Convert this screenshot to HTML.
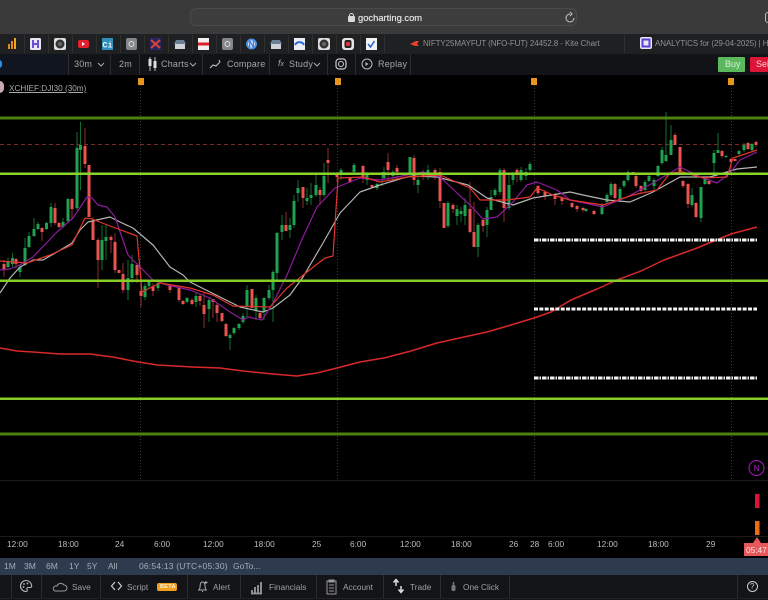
<!DOCTYPE html>
<html><head><meta charset="utf-8">
<style>
html,body{margin:0;padding:0;width:768px;height:600px;overflow:hidden;background:#000;font-family:"Liberation Sans",sans-serif}
#w{position:absolute;left:0;top:0;width:768px;height:600px;overflow:hidden;filter:blur(.3px)}
.a{position:absolute}
.t{position:absolute;white-space:nowrap;line-height:12px}
</style></head><body><div id="w">
<div class="a" style="left:0;top:0;width:768px;height:34px;background:#3a3a3a"></div>
<div class="a" style="left:190px;top:8px;width:387px;height:18px;background:#3d3d3d;border:1px solid #4b4b4b;border-radius:6px;box-sizing:border-box"></div>
<div class="a" style="left:348px;top:16px;width:7px;height:6px;background:#d8d8d8;border-radius:1px"></div>
<div class="a" style="left:349px;top:13px;width:3px;height:4px;border:1px solid #d8d8d8;border-bottom:0;border-radius:3px 3px 0 0"></div>
<div class="t" style="left:358px;top:12px;font-size:9.400px;color:#e2e2e2;text-shadow:0 0 .5px #e2e2e2">gocharting.com</div>
<svg class="a" style="left:564px;top:11px" width="12" height="13" viewBox="0 0 12 13" fill="none" stroke="#c8c8c8" stroke-width="1"><path d="M6 3A4 4 0 1 0 10 7M6 1l2 2-2 2"/></svg>
<div class="a" style="left:765px;top:12px;width:6px;height:11px;border:1px solid #bbb;border-radius:7px;box-sizing:border-box"></div>

<div class="a" style="left:0;top:34px;width:768px;height:20px;background:#1f2022"></div>
<svg class="a" style="left:0;top:34px" width="768" height="20">
<g stroke="#2e2f31"><path d="M24.500 1V19M48.500 1V19M72.500 1V19M96.500 1V19M120.500 1V19M144.500 1V19M168.500 1V19M192.500 1V19M216.500 1V19M240.500 1V19M264.500 1V19M288.500 1V19M312.500 1V19M336.500 1V19M360.500 1V19M384.500 1V19M624.500 1V19"/></g>
<g transform="translate(0,1)">
<rect x="8" y="9" width="2" height="5" fill="#e08a1e"/><rect x="11" y="6" width="2" height="8" fill="#e08a1e"/><rect x="14" y="3" width="2" height="11" fill="#f4a623"/>
<rect x="30" y="3" width="11" height="12" rx="1.500" fill="#e8e6f5"/><path d="M33 5V13M38 5V13M33 9H38" stroke="#6a4fd8" stroke-width="2"/>
<rect x="54" y="3" width="12" height="12" rx="2" fill="#ddd"/><circle cx="60" cy="9" r="4.500" fill="#333"/><circle cx="60" cy="9" r="2" fill="#666"/>
<rect x="78" y="5" width="11" height="8" rx="2" fill="#e8202e"/><path d="M82 7v4l3-2z" fill="#fff"/>
<rect x="102" y="3" width="11" height="12" fill="#2f8fb8"/><text x="107.500" y="12.500" font-size="8.500" font-weight="bold" fill="#e8f5fb" text-anchor="middle" font-family="Liberation Mono">Ci</text>
<rect x="126" y="3" width="11" height="12" rx="2" fill="#85868a"/><circle cx="131.500" cy="9" r="2.500" fill="none" stroke="#ddd"/>
<rect x="150" y="3" width="11" height="12" rx="1" fill="#2a2560"/><path d="M151 5l9 8M160 5l-9 8" stroke="#d8443a" stroke-width="2"/>
<path d="M175 8h10v6h-10z" fill="#cfd3d8"/><path d="M176 5h8l2 4h-12z" fill="#6a7e96"/>
<rect x="198" y="3" width="11" height="12" fill="#f2f2f2"/><path d="M198 9h11" stroke="#d8202e" stroke-width="3"/>
<rect x="222" y="3" width="11" height="12" rx="2" fill="#85868a"/><circle cx="227.500" cy="9" r="2.500" fill="none" stroke="#ddd"/>
<circle cx="251.500" cy="9" r="5.500" fill="#4a90e8"/><circle cx="251.500" cy="9" r="3.500" fill="#dfe9f5"/><text x="251.500" y="12" font-size="8" font-weight="bold" fill="#2a6ad8" text-anchor="middle" font-family="Liberation Sans">N</text>
<path d="M271 8h10v6h-10z" fill="#cfd3d8"/><path d="M272 5h8l2 4h-12z" fill="#6a7e96"/>
<rect x="294" y="3" width="11" height="12" fill="#e9eef5"/><path d="M295 10a5 5 0 0 1 9 0" fill="none" stroke="#2a6ad8" stroke-width="2"/>
<rect x="318" y="3" width="12" height="12" rx="2" fill="#ddd"/><circle cx="324" cy="9" r="4.500" fill="#333"/><circle cx="324" cy="9" r="2" fill="#666"/>
<rect x="342" y="3" width="12" height="12" rx="3" fill="#e5e5e5"/><rect x="344.500" y="5" width="7" height="8" rx="2" fill="#222"/><rect x="346" y="7" width="4" height="4" fill="#d8333a"/>
<rect x="366" y="3" width="11" height="12" fill="#f2f2f2"/><path d="M368 9l2.500 3 4-6" fill="none" stroke="#2060c8" stroke-width="1.500"/>
<path d="M410 9l6-3h3l-2 3 2 2h-4z" fill="#e8412c"/>
<rect x="640" y="2" width="12" height="12" rx="2" fill="#e9e6fa"/><rect x="642.500" y="4.500" width="7" height="7" fill="none" stroke="#5a3fd0" stroke-width="2"/>
</g></svg>
<div class="t" style="left:423px;top:38px;font-size:8px;letter-spacing:-.09px;color:#8f9092">NIFTY25MAYFUT (NFO-FUT) 24452.8 - Kite Chart</div>
<div class="t" style="left:655px;top:38px;font-size:8px;letter-spacing:-.09px;color:#8f9092">ANALYTICS for (29-04-2025) | H</div>

<div class="a" style="left:0;top:54px;width:768px;height:21px;background:#121317"></div>
<div class="a" style="left:0;top:54px;width:68px;height:21px;background:#10151f"></div>
<div class="a" style="left:-4px;top:60px;width:6px;height:8px;background:#2f8ae8;border-radius:4px"></div>
<svg class="a" style="left:0;top:54px" width="768" height="22">
<path d="M68.500 0V21M110.500 0V21M139.500 0V21M202.500 0V21M269.500 0V21M327.500 0V21M355.500 0V21M410.500 0V21" stroke="#2a2c30"/>
<path d="M98 8l3 3 3-3M190 8l3 3 3-3M314 8l3 3 3-3" transform="translate(0,1)" fill="none" stroke="#aaa"/>
<path d="M150 3V17M155 3V17" stroke="#bbb"/><rect x="148.500" y="5" width="3" height="7" fill="#ddd"/><rect x="153.500" y="7" width="3" height="7" fill="#ddd"/>
<path d="M210 14l3-3 3 1 4-4M219 6l1 2" fill="none" stroke="#bbb" stroke-width="1.200"/>
<rect x="336" y="5" width="10" height="10" rx="3" fill="none" stroke="#ccc" stroke-width="1.200"/><circle cx="341" cy="10" r="2.500" fill="none" stroke="#ccc"/>
<circle cx="367" cy="10" r="5" fill="none" stroke="#bbb"/><path d="M365.500 8v4l3-2z" fill="#bbb"/>
</svg>
<div class="t" style="left:74px;top:58px;font-size:9px;color:#a4a6aa;letter-spacing:.2px">30m</div>
<div class="t" style="left:119px;top:58px;font-size:9px;color:#a4a6aa;letter-spacing:.2px">2m</div>
<div class="t" style="left:161px;top:58px;font-size:9px;color:#a4a6aa;letter-spacing:.2px">Charts</div>
<div class="t" style="left:227px;top:58px;font-size:9px;color:#a4a6aa;letter-spacing:.2px">Compare</div>
<div class="t" style="left:278px;top:57px;font-size:9px;color:#a4a6aa;font-style:italic">f<span style="font-size:7px">x</span></div>
<div class="t" style="left:289px;top:58px;font-size:9px;color:#a4a6aa;letter-spacing:.2px">Study</div>
<div class="t" style="left:378px;top:58px;font-size:9px;color:#a4a6aa;letter-spacing:.2px">Replay</div>
<div class="a" style="left:718px;top:57px;width:27px;height:15px;background:#5cb85c;border-radius:1px"></div>
<div class="t" style="left:725px;top:58px;font-size:9px;color:#d8f0d8">Buy</div>
<div class="a" style="left:750px;top:57px;width:18px;height:15px;background:#dc1538;border-radius:1px"></div>
<div class="t" style="left:756px;top:58px;font-size:9px;color:#f5d0d5">Sell</div>

<svg class="a" style="left:0;top:75px" width="768" height="483" viewBox="0 75 768 483">
<path d="M140.500 85V480M337.500 85V480M534.500 85V480M731.500 85V480" stroke="#3a3a3a" stroke-dasharray="1 2"/>
<path d="M0 480.500H768M0 536.500H768" stroke="#1b1b1b"/>
<path d="M0 144.500H757" stroke="#7a2a2c" stroke-dasharray="4 3"/>

<g fill="none" stroke="#12702f" stroke-width="1">
<path d="M8 258V268M12.500 253V267M20 265V277M25 238V266M29 232V248M34 218V237M38 222V230M46.500 222V230M51 203V227M63 218V228M68 198V222M77 132V210M80.500 122V190M102 225V270M106 225V260M128 260V300M132 255V283M145 283V300M149 280V288M158 281V291M187 297V303M196 293V307M209 297V322M230 333V350M234 327V335M239 323V330M243 313V324M247 285V317M256 295V320M264 297V320M269 285V300M273 270V322M277 232V280M282 215V240M290 218V238M294 195V228M298 180V202M307 188V205M311 183V205M316 175V197M324 163V197M341 168V180M354 163V175M367 172V185M377 183V190M382 172V186M384 167V180M393 170V180M410 157V177M418 177V193M428 165V180M448 201V228M457 205V225M461 207V222M465 198V225M478 223V257M487 207V237M491 190V210M495 188V197M500 168V195M509 173V210M513 172V185M521 167V182M526 168V180M530 162V172M586 208V212M602 203V215M607 193V203M611 182V197M620 187V202M624 180V188M628 170V182M645 180V192M649 175V182M654 178V192M658 165V177M662 147V165M666 112V162M671 125V155M692 188V207M701 187V222M705 178V185M714 150V173M718 133V153M726 155V158M739 150V155M744 143V152M752 143V152"/>
</g>
<g fill="none" stroke="#8e2c2e" stroke-width="1">
<path d="M4 260V277M16 258V268M42 227V241M55 203V225M59 222V228M72 198V220M85 128V168M89 165V217M93 217V240M98 238V288M111 235V253M115 233V273M119 270V273M123 263V293M137 263V283M141 277V307M153 283V296M170 285V293M179 287V302M183 300V305M192 298V305M200 294V306M204 293V328M213 300V318M217 303V322M222 313V322M226 323V337M252 289V308M260 312V320M286 212V230M303 187V208M320 187V205M328 148V183M337 172V182M350 177V183M363 165V183M372 185V188M388 153V180M397 165V178M414 155V185M423 170V180M435 168V180M440 168V208M444 203V228M453 203V213M470 182V233M474 202V247M483 218V232M504 168V222M517 168V182M538 185V195M545 190V200M555 193V205M562 196V205M572 202V208M577 205V212M583 207V212M594 210V215M615 183V200M633 172V175M636 175V188M641 185V193M675 133V145M680 147V175M683 180V188M688 183V208M696 202V218M709 180V185M722 150V158M731 158V175M735 159V161M748 142V150M756 141V147"/>
</g>
<g fill="none" stroke="#1fa24f" stroke-width="3">
<path d="M8 261V267M12.500 258V264M20 267V272M25 248V265M29 236V247M34 229V236M38 224V229M46.500 223V229M51 207V223M63 222V227M68 199V221M77 148V208M80.500 145V150M102 240V260M106 237V241M128 278V290M132 264V278M145 286V297M149 282V286M158 283V288M187 298V302M196 296V302M209 300V309M230 335V338M234 328V333M239 324V328M243 316V322M247 290V307M256 298V310M264 298V312M269 290V298M273 272V290M277 233V273M282 225V232M290 225V230M294 201V225M298 188V193M307 198V201M311 195V198M316 185V195M324 176V195M341 170V175M354 165V172M367 175V180M377 184V188M384 172V178M393 172V176M410 157V175M418 180V185M428 170V175M448 203V226M457 209V216M461 211V214M465 205V216M478 225V247M487 210V225M491 197V210M495 190V195M500 170V192M509 185V208M513 175V180M521 170V180M526 172V176M530 164V170M586 209V211M602 205V214M607 195V202M611 184V195M620 189V200M624 181V186M628 172V180M645 182V190M649 176V181M654 180V186M658 166V176M662 150V163M666 155V161M671 140V155M692 195V205M701 187V218M705 179V184M714 153V163M718 150V153M726 156V157M739 151V154M744 145V150M752 144V150"/>
</g>
<g fill="none" stroke="#ea5450" stroke-width="3">
<path d="M4 264V270M16 259V264M42 228V232M55 208V223M59 223V227M72 199V209M85 146V164M89 165V217M93 221V240M98 240V260M111 237V240M115 242V270M119 270V273M123 274V290M137 265V275M141 291V296M153 286V291M170 286V290M179 288V300M183 301V304M192 300V304M200 296V301M204 305V314M213 299V302M217 305V313M222 313V321M226 324V336M252 289V308M260 313V318M286 225V231M303 187V198M320 190V195M328 160V163M337 173V177M350 178V182M363 166V178M372 185V187M388 162V170M397 168V172M414 158V180M423 172V176M435 170V174M440 172V201M444 203V228M453 205V209M470 209V232M474 232V247M483 220V226M504 170V208M517 170V175M538 186V193M545 192V196M555 195V199M562 198V201M572 203V207M577 206V209M583 208V210M594 211V214M615 184V198M633 172V174M636 176V186M641 186V191M675 135V145M680 147V175M683 181V186M688 184V204M696 203V217M709 181V184M722 151V156M731 159V162M735 159V161M748 143V149M756 142V145"/>
</g>

<polyline fill="none" stroke="#b5b5b5" stroke-width="1.200" stroke-linejoin="round" points="0,293 10,278 20,267 33,260 43,260 57,252 72,243 80,230 88,222 110,217 120,222 133,228 153,245 170,267 183,275 190,282 210,292 240,307 263,312 273,308 290,295 303,277 323,243 340,213 360,192 380,185 403,178 413,176 437,177 468,185 487,198 513,205 533,198 570,192 583,195 607,200 630,202 653,192 680,177 710,177 737,169 757,167"/>
<polyline fill="none" stroke="#8e1a9e" stroke-width="1.200" stroke-linejoin="round" points="0,270 10,269 20,265 33,257 57,232 73,218 87,197 92,198 98,205 107,207 115,217 128,255 140,267 153,280 167,285 190,290 210,298 230,312 243,320 248,317 262,320 273,303 287,275 303,237 317,207 335,188 360,178 380,180 397,177 423,172 440,177 457,193 470,205 483,219 497,217 513,202 527,185 537,182 557,190 570,200 603,207 627,197 653,183 680,167 703,178 717,183 730,173 740,160 757,152"/>
<polyline fill="none" stroke="#e0352b" stroke-width="1.200" stroke-linejoin="round" points="0,261 27,263 50,255 72,245 85,218 92,219 110,226 137,236 142,292 160,283 190,288 213,295 233,306 270,307 287,288 307,272 325,258 333,256 338,178 363,177 380,182 407,177 440,175 470,188 480,200 507,200 530,197 537,188 553,195 570,200 603,205 633,195 657,190 670,173 683,172 703,178 727,177 733,158 757,150"/>
<polyline fill="none" stroke="#d9282a" stroke-width="1.500" stroke-linejoin="round" points="0,348 17,351 33,352 60,354 90,354 113,357 133,361 157,365 193,367 220,368 243,371 273,374 297,376 317,373 337,368 360,362 384,358 411,351 437,343 464,337 487,332 511,325 534,318 551,312 571,300 597,289 617,280 641,271 664,260 697,248 731,234 757,227"/>

<rect x="0" y="116.500" width="768" height="3" fill="#4c8010"/>
<rect x="0" y="172.500" width="768" height="2.500" fill="#8ad42a"/>
<rect x="0" y="279.500" width="768" height="2.500" fill="#86cc28"/>
<rect x="0" y="397.500" width="768" height="2.500" fill="#86cc28"/>
<rect x="0" y="432.500" width="768" height="3" fill="#4c8010"/>

<path d="M534 240H757M534 378H757" stroke="#f2f2f2" stroke-width="3" stroke-dasharray="4.500 1 1.500 1"/>
<path d="M534 309H757" stroke="#f2f2f2" stroke-width="3" stroke-dasharray="4 1.350"/>

<g fill="#e8961e"><rect x="138" y="78" width="6" height="7"/><rect x="335" y="78" width="6" height="7"/><rect x="531" y="78" width="6" height="7"/><rect x="728" y="78" width="6" height="7"/></g>
<circle cx="756.500" cy="468" r="7.500" fill="none" stroke="#8a1a9e" stroke-width="1.200"/>
<text x="756.500" y="471" font-size="8" font-weight="bold" fill="#7a1a8e" text-anchor="middle" font-family="Liberation Sans">N</text>
<rect x="755" y="494" width="4.500" height="14" fill="#dc1538"/>
<rect x="755" y="521" width="4.500" height="14" fill="#f06a12"/>
</svg>
<div class="a" style="left:-5px;top:81px;width:9px;height:12px;background:#c9a8b5;border-radius:5px"></div>
<div class="t" style="left:9px;top:83px;font-size:8.200px;color:#a8a8a8;text-decoration:underline">XCHIEF:DJI30 (30m)</div>

<div style="position:absolute;left:0;top:538px;width:768px;height:12px;font-size:8.300px;color:#bdbdbd">
<span class="t" style="left:7px">12:00</span><span class="t" style="left:58px">18:00</span><span class="t" style="left:115px">24</span><span class="t" style="left:154px">6:00</span><span class="t" style="left:203px">12:00</span><span class="t" style="left:254px">18:00</span><span class="t" style="left:312px">25</span><span class="t" style="left:350px">6:00</span><span class="t" style="left:400px">12:00</span><span class="t" style="left:451px">18:00</span><span class="t" style="left:509px">26</span><span class="t" style="left:530px">28</span><span class="t" style="left:548px">6:00</span><span class="t" style="left:597px">12:00</span><span class="t" style="left:648px">18:00</span><span class="t" style="left:706px">29</span>
</div>
<div class="a" style="left:744px;top:543px;width:24px;height:13px;background:#e8585a"></div>
<div class="a" style="left:753px;top:537px;width:0;height:0;border-left:4px solid transparent;border-right:4px solid transparent;border-bottom:6px solid #e8585a"></div>
<div class="t" style="left:746px;top:544px;font-size:8.300px;color:#fbe4e4">05:47</div>

<div class="a" style="left:0;top:558px;width:768px;height:17px;background:#2e3a4d"></div>
<div style="position:absolute;left:0;top:560px;width:768px;height:12px;font-size:8.500px;color:#a7adb8">
<span class="t" style="left:4px">1M</span><span class="t" style="left:24px">3M</span><span class="t" style="left:46px">6M</span><span class="t" style="left:69px">1Y</span><span class="t" style="left:87px">5Y</span><span class="t" style="left:108px">All</span><span class="t" style="left:139px;letter-spacing:.2px">06:54:13 (UTC+05:30)</span><span class="t" style="left:233px">GoTo...</span>
</div>

<div class="a" style="left:0;top:575px;width:768px;height:25px;background:#131417"></div>
<svg class="a" style="left:0;top:575px" width="768" height="25">
<path d="M11.500 0V23M41.500 0V23M100.500 0V23M187.500 0V23M240.500 0V23M316.500 0V23M383.500 0V23M440.500 0V23M509.500 0V23M737.500 0V23" stroke="#2a2c30"/>
<path d="M0 23.500H768" stroke="#222"/>
<path d="M26 5.500a5.500 5.500 0 0 0 0 11c1.500 0 1.500-1 1-2s0-2 1.500-2h2c1 0 1.500-1 1-2.500a5.500 5.500 0 0 0-5.500-4.500z" fill="none" stroke="#bbb" stroke-width="1.100"/><circle cx="24" cy="9" r=".9" fill="#bbb"/><circle cx="27.500" cy="8.500" r=".9" fill="#bbb"/><circle cx="23.500" cy="12" r=".9" fill="#bbb"/>
<path d="M55 16h9a3 3 0 0 0 0-6a4 4 0 0 0-7 1a2.500 2.500 0 0 0-2 5z" fill="none" stroke="#999"/>
<path d="M115 8l-3.500 4 3.500 4M118 8l3.500 4-3.500 4" transform="translate(0,-1)" fill="none" stroke="#ccc" stroke-width="1.200"/>
<path d="M198 15h9M199 15c2-2 0-8 3.500-8s2 6 3.500 8M202 16.500h1M206 6v3M204.500 7.500h3" fill="none" stroke="#aaa"/>
<path d="M252 18v-3M255 18v-6M258 18v-8M261 18v-11M251 18.500h11" stroke="#999" stroke-width="1.800" fill="none"/>
<rect x="327" y="6" width="9" height="13" fill="none" stroke="#999"/><path d="M329 5h5v2h-5zM329 10h5M329 13h5M329 16h5" fill="none" stroke="#999"/>
<path d="M396 11V5M393.500 7.500L396 4.500L398.500 7.500M401 11V17M398.500 14.500L401 17.500L403.500 14.500" fill="none" stroke="#ddd" stroke-width="1.500"/>
<path d="M453.500 7v3" stroke="#777" stroke-width="1.500"/><rect x="451.500" y="10" width="4" height="6" rx="1.500" fill="#777"/>
<circle cx="752.500" cy="11.500" r="5" fill="none" stroke="#ccc"/>
</svg>
<div class="a" style="left:157px;top:583px;width:20px;height:8px;background:#f0a01e;border-radius:2px"></div>
<div class="t" style="left:160px;top:581px;font-size:5.500px;font-weight:bold;color:#fff4dc;letter-spacing:.3px">BETA</div>
<div style="position:absolute;left:0;top:581px;width:768px;height:12px;font-size:8.300px;color:#9fa1a5">
<span class="t" style="left:72px">Save</span><span class="t" style="left:127px">Script</span><span class="t" style="left:213px">Alert</span><span class="t" style="left:269px">Financials</span><span class="t" style="left:343px">Account</span><span class="t" style="left:410px">Trade</span><span class="t" style="left:463px">One Click</span>
</div>
<div class="t" style="left:750px;top:581px;font-size:8px;color:#ccc">?</div>
</div></body></html>
